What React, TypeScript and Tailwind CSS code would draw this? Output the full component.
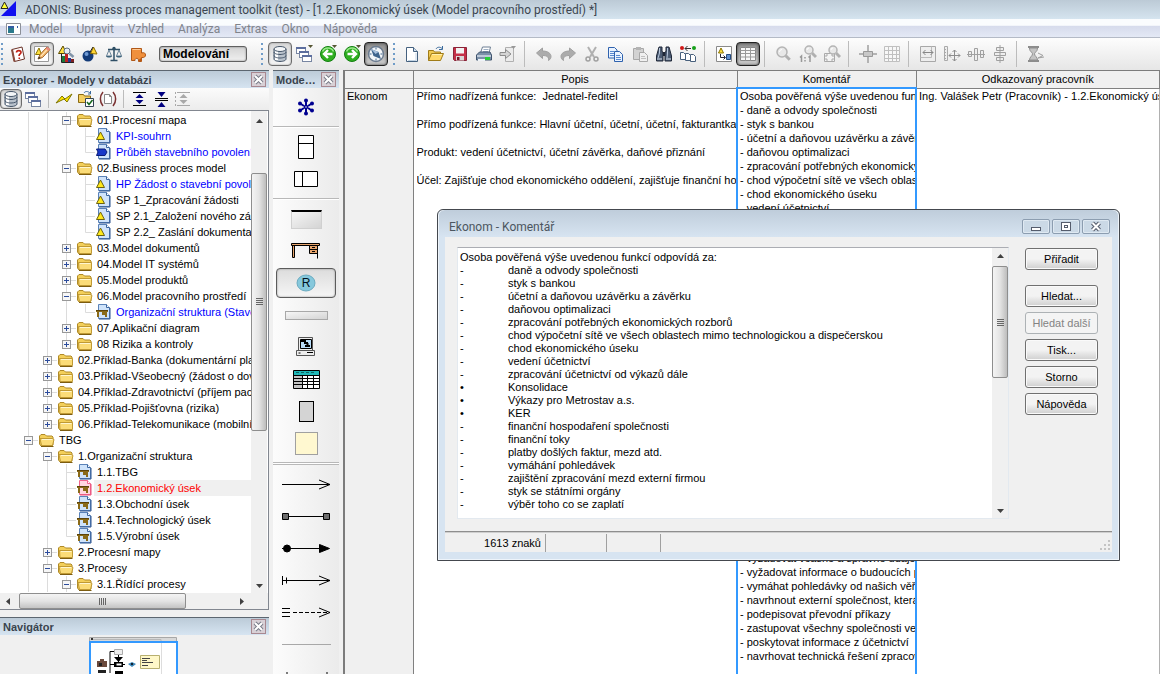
import type { ReactNode } from "react";
import clsx from "clsx";

interface TreeItem {
  depth: number;
  label: string;
  icon: "folder" | "process" | "map" | "desk" | "desk-active";
  toggle?: "open" | "closed";
  tone?: "link" | "active";
  last?: boolean;
}

const treeItems: TreeItem[] = [
  { depth: 2, label: "01.Procesní mapa", icon: "folder", toggle: "open" },
  { depth: 3, label: "KPI-souhrn", icon: "process", tone: "link" },
  { depth: 3, label: "Průběh stavebního povolení", icon: "map", tone: "link", last: true },
  { depth: 2, label: "02.Business proces model", icon: "folder", toggle: "open" },
  { depth: 3, label: "HP Žádost o stavební povol", icon: "process", tone: "link" },
  { depth: 3, label: "SP 1_Zpracování žádosti", icon: "process" },
  { depth: 3, label: "SP 2.1_Založení nového zál", icon: "process" },
  { depth: 3, label: "SP 2.2_ Zaslání dokumentac", icon: "process", last: true },
  { depth: 2, label: "03.Model dokumentů", icon: "folder", toggle: "closed" },
  { depth: 2, label: "04.Model IT systémů", icon: "folder", toggle: "closed" },
  { depth: 2, label: "05.Model produktů", icon: "folder", toggle: "closed" },
  { depth: 2, label: "06.Model pracovního prostředí", icon: "folder", toggle: "open" },
  { depth: 3, label: "Organizační struktura (Stave", icon: "desk", tone: "link", last: true },
  { depth: 2, label: "07.Aplikační diagram", icon: "folder", toggle: "closed" },
  { depth: 2, label: "08 Rizika a kontroly", icon: "folder", toggle: "closed", last: true },
  { depth: 1, label: "02.Příklad-Banka (dokumentární pla", icon: "folder", toggle: "closed" },
  { depth: 1, label: "03.Příklad-Všeobecný (žádost o dov", icon: "folder", toggle: "closed" },
  { depth: 1, label: "04.Příklad-Zdravotnictví (příjem pac", icon: "folder", toggle: "closed" },
  { depth: 1, label: "05.Příklad-Pojišťovna (rizika)", icon: "folder", toggle: "closed" },
  { depth: 1, label: "06.Příklad-Telekomunikace (mobilní", icon: "folder", toggle: "closed", last: true },
  { depth: 0, label: "TBG", icon: "folder", toggle: "open" },
  { depth: 1, label: "1.Organizační struktura", icon: "folder", toggle: "open" },
  { depth: 2, label: "1.1.TBG", icon: "desk" },
  { depth: 2, label: "1.2.Ekonomický úsek", icon: "desk-active", tone: "active" },
  { depth: 2, label: "1.3.Obchodní úsek", icon: "desk" },
  { depth: 2, label: "1.4.Technologický úsek", icon: "desk" },
  { depth: 2, label: "1.5.Výrobní úsek", icon: "desk", last: true },
  { depth: 1, label: "2.Procesní mapy", icon: "folder", toggle: "closed" },
  { depth: 1, label: "3.Procesy", icon: "folder", toggle: "open" },
  { depth: 2, label: "3.1.Řídící procesy", icon: "folder", toggle: "open" },
];

const popis = [
  "Přímo nadřízená funkce:  Jednatel-ředitel",
  "",
  "Přímo podřízená funkce: Hlavní účetní, účetní, účetní, fakturantka",
  "",
  "Produkt: vedení účetnictví, účetní závěrka, daňové přiznání",
  "",
  "Účel: Zajišťuje chod ekonomického oddělení, zajišťuje finanční hosp",
];

const duties = [
  "daně a odvody společnosti",
  "styk s bankou",
  "účetní a daňovou uzávěrku a závěrku",
  "daňovou optimalizaci",
  "zpracování potřebných ekonomických rozborů",
  "chod výpočetní sítě ve všech oblastech mimo technologickou a dispečerskou",
  "chod ekonomického úseku",
  "vedení účetnictví",
  "zpracování účetnictví od výkazů dále",
  "•Konsolidace",
  "•Výkazy pro Metrostav a.s.",
  "•KER",
  "finanční hospodaření společnosti",
  "finanční toky",
  "platby došlých faktur, mezd atd.",
  "vymáhání pohledávek",
  "zajištění zpracování mezd externí firmou",
  "styk se státními orgány",
  "výběr toho co se zaplatí",
];

const rights = [
  "vyžadovat včasné a správné údaje",
  "vyžadovat informace o budoucích p",
  "vymáhat pohledávky od našich věři",
  "navrhnout externí společnost, která",
  "podepisovat převodní příkazy",
  "zastupovat všechny společnosti ve",
  "poskytovat informace z účetnictví",
  "navrhovat technická řešení zpracov",
];

const intro = "Osoba pověřená výše uvedenou funkcí odpovídá za:";

const commentText = [
  intro,
  ...duties.map((d) => (d.startsWith("•") ? `•\t${d.slice(1)}` : `-\t${d}`)),
].join("\n");

const komentar = [
  intro,
  ...duties.map((d) => (d.startsWith("•") ? d : `- ${d}`)),
  ...Array<string>(13).fill(""),
  ...rights.map((r) => `- ${r}`),
];

function Svg({ size = 18, children }: { size?: number; children: ReactNode }) {
  return (
    <svg width={size} height={size} viewBox={`0 0 ${size} ${size}`} fill="none" aria-hidden="true" className="shrink-0">
      {children}
    </svg>
  );
}

/* ---------- toolbar icons, all on an 18px grid ---------- */

const Database = () => (
  <Svg>
    <path d="M3 4v10c0 1.400 2.700 2.500 6 2.500s6-1.100 6-2.500V4" fill="#b9c2cc" stroke="#46566a" />
    <path d="M5.500 6v9" stroke="#fff" strokeWidth="3" />
    <path d="M3 7c0 1.400 2.700 2.500 6 2.500s6-1.100 6-2.500M3 10.500C3 12 5.700 13 9 13s6-1 6-2.500" stroke="#46566a" />
    <ellipse cx="9" cy="4" rx="6" ry="2.500" fill="#f4f6f8" stroke="#46566a" />
  </Svg>
);

const Windows = () => (
  <Svg>
    {[
      [1, 2],
      [4, 6],
      [7, 10],
    ].map(([x, y]) => (
      <g key={x}>
        <rect x={x + 0.5} y={y + 0.5} width="9" height="6" fill="#fff" stroke="#7886a2" />
        <path d={`M${x} ${y + 1}h10`} stroke="#5c6e9e" strokeWidth="2" />
      </g>
    ))}
  </Svg>
);

const HelpBook = () => (
  <Svg>
    <path d="M3 4.500 13 2l2.500 12-10 2.500z" fill="#fff" stroke="#6b3328" />
    <path d="M3 4.500 5.500 16.500" stroke="#8a4a3c" strokeWidth="2" />
    <path d="M7.500 7.500c0-2.500 4.500-2.500 4.500 0 0 1.500-2 1.500-2 3.500M10.300 12.500V14" stroke="#c02014" strokeWidth="1.600" />
  </Svg>
);

const EditModel = () => (
  <Svg>
    <path d="M1.500 1.500h14v15h-14z" fill="#fff" stroke="#9a9a9a" />
    <path d="M6 3 2.500 9.500h6z" fill="#ffe040" stroke="#8a7400" />
    <path d="m5 14 2-4.500L14 2l3 2.500-7.500 8z" fill="#f8c078" stroke="#a06020" />
    <path d="m8 11 7-7.500" stroke="#fff0c8" />
    <path d="m5 14 1-2.500 1.700 1.500z" fill="#333" />
    <path d="m12.500 3.500 1.800-1.700 2.700 2.500L15.300 6z" fill="#e88880" />
  </Svg>
);

const Analysis = () => (
  <Svg>
    <path d="M6 1 1.500 8.500h8z" fill="#ffe040" stroke="#5a4a00" />
    <circle cx="10" cy="6" r="3" fill="#e8eef4" stroke="#596b80" />
    <path d="m12.500 8.500 4 3.500" stroke="#8294a8" strokeWidth="2.500" />
    <path d="M5 17v-6h3v6z" fill="#1c7a3a" />
    <path d="M8 17V9h3v8z" fill="#c02020" />
    <path d="M11 17v-4h3v4z" fill="#243a90" />
    <path d="M14 17v-3h3v3z" fill="#802020" />
    <path d="M4.500 9v8.500H17" stroke="#222" />
  </Svg>
);

const Simulation = () => (
  <Svg>
    <circle cx="7" cy="11" r="5.500" fill="#123a78" />
    <circle cx="5.500" cy="9" r="2" fill="#6f9ad4" />
    <path d="m12.500 2-3 6.500 6.500.5z" fill="#ffd633" stroke="#8a6a00" />
    <path d="m12 2-3 5" stroke="#222" />
  </Svg>
);

const Scales = () => (
  <Svg>
    <path d="M9 2v13M5.500 15.500h7M3 4.500h12" stroke="#2f4f66" strokeWidth="1.500" />
    <path d="M4 5 1.500 11h5zM14 5l-2.500 6h5z" stroke="#6a8498" />
    <path d="M1 11h6c-.5 2-5.500 2-6 0zM11 11h6c-.5 2-5.500 2-6 0z" fill="#3f647c" />
    <circle cx="9" cy="3.500" r="1.700" fill="#2f4f66" />
  </Svg>
);

const Puzzle = () => (
  <Svg>
    <path
      d="M2.500 3.500h10v4.500c3-1 4 .5 4 2s-1 3-4 2.500v4H9.500c1-4-4-4-3.500-1h-3.500z"
      fill="#f0903c"
      stroke="#b05818"
    />
    <path d="M3.500 4.500h8" stroke="#ffc890" />
    <path d="M9 16c1-2 3-3 4-3v3z" fill="#b85814" />
  </Svg>
);

const GreenArrow = ({ left }: { left?: boolean }) => (
  <Svg>
    <circle cx="9" cy="9" r="7.500" fill="#2fae20" stroke="#128010" />
    <path d="M3.500 6.500a6 6 0 0 1 11 0" stroke="#9be88c" strokeWidth="1.500" />
    <path d={left ? "M13.500 9H6M9 5 5 9l4 4" : "M4.500 9H12M9 5l4 4-4 4"} stroke="#fff" strokeWidth="2.400" />
  </Svg>
);

const Compass = () => (
  <Svg>
    <circle cx="9" cy="9" r="7.500" fill="#f4f6f8" stroke="#6c7c90" strokeWidth="1.500" />
    <path d="M9 2.500v2M9 13.500v2M2.500 9h2M13.500 9h2" stroke="#3f648c" />
    <path d="m4 4 7.500 3L14 14 6.500 11z" fill="#3f648c" />
    <path d="m4 4 4.500 5 3-2z" fill="#a8c0dc" />
  </Svg>
);

const NewFile = () => (
  <Svg>
    <path d="M3.500 2.500h7l4 4v10h-11z" fill="#fff" stroke="#45617f" />
    <path d="M10.500 2.500v4h4" fill="#cfdfee" stroke="#45617f" />
    <path d="M13 8v8M5 15.500h8" stroke="#c3d4e4" />
  </Svg>
);

const OpenFolder = () => (
  <Svg>
    <path d="M1.500 15.500v-10h5l1 1.500h6v3" fill="#f0c850" stroke="#a07c18" />
    <path d="m1.500 15.500 3-7h12l-3 7z" fill="#ffd868" stroke="#a07c18" />
    <path d="M5 9.500h10" stroke="#fff0b0" />
    <path d="M9 4c1-2 4-2.500 6-.5M15.500 1v3.500H12" stroke="#3a6a9c" />
  </Svg>
);

const Floppy = () => (
  <Svg>
    <path d="M2.500 2.500h13v13h-12l-1-1z" fill="#c43048" stroke="#8a2438" />
    <path d="M5 3h8v5.500H5z" fill="#f2f2f2" />
    <path d="M5 11h8v4.500H5z" fill="#d8d8d8" />
    <path d="M6 12h2.500v3H6z" fill="#7a1426" />
  </Svg>
);

const Printer = () => (
  <Svg>
    <path d="m5.500 8 2-6h8L14 8z" fill="#fff" stroke="#6d7f94" />
    <path d="M8.500 4.500h5M8 6.500h5" stroke="#9fb0c4" />
    <path d="m1.500 10 3-3h10.500l1.500 3v5h-15z" fill="#7b90a8" stroke="#3f546e" />
    <path d="M2 11h14" stroke="#d3dde8" strokeWidth="1.500" />
    <path d="M10 12h5v3h-5z" fill="#28d03a" />
    <path d="M3 15h7" stroke="#eef3f8" strokeWidth="2" />
  </Svg>
);

const Export = () => (
  <Svg>
    <path d="M6.500 2.500h8v14h-8z" fill="#ececec" stroke="#b0b0b0" />
    <path d="M1 7.500h5.500v-3l5.500 4.500-5.500 4.500v-3H1z" fill="#d4d4d4" stroke="#8c8c8c" />
    <path d="M12 1h5l-2.500 3z" fill="#999" />
  </Svg>
);

const Undo = ({ flip }: { flip?: boolean }) => (
  <Svg>
    <path
      d={
        flip
          ? "m16.500 8-6-5v3C5 6 2 8.500 2 11.500c0 1.500.8 3 2.500 4C4 12 6 10.500 10.500 10.500v3z"
          : "m1.500 8 6-5v3c5.500 0 8.500 2.500 8.500 5.500 0 1.500-.8 3-2.500 4 .5-3.500-1.500-5-6-5v3z"
      }
      fill="#acacac"
      stroke="#a0a0a0"
    />
  </Svg>
);

const Scissors = () => (
  <Svg>
    <path d="m5 2 6 10M13 2 7 12" stroke="#b0b0b0" strokeWidth="2" />
    <circle cx="5" cy="14" r="2" stroke="#a0a0a0" strokeWidth="1.500" />
    <circle cx="13" cy="14" r="2" stroke="#a0a0a0" strokeWidth="1.500" />
  </Svg>
);

const Copy = () => (
  <Svg>
    <path d="M1.500 2.500h6l2.500 2.500v8H1.500z" fill="#eaf3ff" stroke="#2f62ae" />
    <path d="M3 6.500h4M3 8.500h4M3 10.500h4" stroke="#5a8ad0" />
    <path d="M7.500 6.500h5l3 3v7h-8z" fill="#eaf3ff" stroke="#2f62ae" />
    <path d="M9 10.500h4M9 12.500h5M9 14.500h5" stroke="#5a8ad0" />
  </Svg>
);

const Paste = () => (
  <Svg>
    <path d="M2.500 3.500h10v11h-10z" fill="#d2d2d2" stroke="#a8a8a8" />
    <path d="M5 2h5v3H5z" fill="#b4b4b4" />
    <path d="M8.500 7.500h5l3 3v6h-8z" fill="#f0f0f0" stroke="#a8a8a8" />
    <path d="M10 11.500h4M10 13.500h5" stroke="#c0c0c0" />
  </Svg>
);

const Binoculars = () => (
  <Svg>
    <path d="M4 2h3v4l1 2v8H1.500v-5zM14 2h-3v4l-1 2v8h6.500v-5z" fill="#4c5c74" stroke="#202838" />
    <path d="M8 7h2v4H8z" fill="#202838" />
    <path d="M4.500 3v5l-1.500 5M12.500 3v5l-.5 5" stroke="#b9c8dc" />
    <path d="M2 14h5M11 14h5" stroke="#dce6f2" />
  </Svg>
);

const Attributes = () => (
  <Svg>
    <circle cx="3" cy="3" r="2" fill="#d01818" />
    <circle cx="15" cy="3" r="2" fill="#17a01a" />
    <path d="M6 3.500h6M8.500 1 6 3.500 8.500 6" stroke="#333" />
    {[1, 6, 11].map((x) => (
      <path key={x} d={`M${x + 0.5} ${7.5 + (x - 1) / 5}h3l2 2v5h-5z`} fill="#fff" stroke="#48607c" />
    ))}
  </Svg>
);

const ModelView = () => (
  <Svg>
    <path d="M1.500 1.500h15v15h-15z" fill="#fff" stroke="#8a8a8a" />
    <path d="M6 3 3.500 8h5z" fill="#ffe040" stroke="#8a7400" />
    <path d="M5.500 9v3.500H10M8.500 10.500l2 2-2 2" stroke="#223" />
    <path d="M11.500 9.500h4v5h-4z" fill="#5f8fd0" stroke="#234a80" />
  </Svg>
);

const TableView = () => (
  <Svg>
    <path d="M1.500 2.500h15v13h-15z" fill="#f8f8f8" stroke="#888" />
    <path d="M1.500 5.500h15M1.500 8.500h15M1.500 12h15M6.500 2.500v13M11.500 2.500v13" stroke="#999" />
  </Svg>
);

const Lens = ({ x = 7, y = 7, r = 5 }: { x?: number; y?: number; r?: number }) => (
  <>
    <path d={`M${x + r * 0.75} ${y + r * 0.75}l4 4`} stroke="#b0b0b0" strokeWidth="3" />
    <circle cx={x} cy={y} r={r} fill="#e8e8e8" stroke="#b4b4b4" strokeWidth="1.500" />
    <path d={`M${x - r / 2} ${y}a${r / 2} ${r / 2} 0 0 1 ${r / 2} ${-r / 2}`} stroke="#fff" />
  </>
);

const Zoom = () => (
  <Svg>
    <Lens />
  </Svg>
);

const ZoomOne = () => (
  <Svg>
    <Lens x={10} y={5} r={4} />
    <path d="M1 12.500 2.500 11v6M9.500 12.500 11 11v6M6 12v1.500M6 15v1.500" stroke="#999" strokeWidth="1.500" />
  </Svg>
);

const ZoomFit = () => (
  <Svg>
    <path d="M1.500 8.500h10v8h-10z" fill="#f4f4f4" stroke="#aaa" />
    <path d="M3 12v-2h2M8 10h2v2M3 13v2h2M10 13v2H8" stroke="#aaa" />
    <Lens x={10} y={5} r={4} />
  </Svg>
);

const Crosshair = () => (
  <Svg>
    <path d="M9 0v18M0 9h18" stroke="#a0a0a0" strokeWidth="1.500" />
    <path d="M4.500 6.500h9v5h-9z" fill="#c8c8c8" stroke="#999" />
  </Svg>
);

const Grid = () => (
  <Svg>
    <path d="M1.500 1.500h15v15h-15zM1.500 5.500h15M1.500 9.500h15M1.500 13.500h15M5.500 1.500v15M9.500 1.500v15M13.500 1.500v15" fill="#f8f8f8" stroke="#c0c0c0" />
  </Svg>
);

const FitWidth = () => (
  <Svg>
    <path d="M1.500 1.500h15v15h-15z" fill="#eee" stroke="#a8a8a8" />
    <path d="M1.500 12.500h11v-11" stroke="#bbb" />
    <path d="M4 7.500h10M6.500 5 4 7.500 6.500 10M11.500 5 14 7.500 11.500 10" stroke="#888" />
  </Svg>
);

const Ruler = () => (
  <Svg>
    <path d="M1.500 1.500h3v14h-3zM1.500 4.500H3M1.500 7.500H3M1.500 10.500H3M1.500 13.500H3" fill="#eee" stroke="#aaa" />
    <path d="M11.500 5v11M6 10.500h11M9.500 7l2-2 2 2M9.500 14l2 2 2-2M15 8.500l2 2-2 2M8 8.500l-2 2 2 2" stroke="#8c8c8c" />
  </Svg>
);

const AlignMiddle = () => (
  <Svg>
    <path d="M1.500 6.500h3v5h-3zM7.500 3.500h3v12h-3zM13.500 5.500h3v7h-3z" fill="#eee" stroke="#a0a0a0" />
    <path d="M0 9.500h18" stroke="#a0a0a0" />
  </Svg>
);

const AlignCenter = () => (
  <Svg>
    <path d="M5.500 2.500h7v3h-7zM3.500 7.500h11v3h-11zM5.500 12.500h7v3h-7z" fill="#eee" stroke="#a0a0a0" />
    <path d="M9 0v18" stroke="#a0a0a0" />
  </Svg>
);

const Hourglass = () => (
  <Svg>
    <path d="M1 2h11M1 16h11" stroke="#8c8c8c" strokeWidth="2" />
    <path d="M2.500 3c0 4 3 4 3 6s-3 3-3 6h8c0-3-3-4-3-6s3-2 3-6z" fill="#c4c4c4" stroke="#909090" />
    <path d="m11 8 5 2.500-5 2.500 6-1" stroke="#a0a0a0" />
  </Svg>
);

const Lightning = () => (
  <Svg>
    <path d="m1 13 6-7 3 3 7-5-5 8-3-3z" fill="#ffe600" stroke="#7d7300" />
  </Svg>
);

const FolderCheck = () => (
  <Svg>
    <path d="M1.500 12.500v-8h5l1 1.500h6v6.500z" fill="#f4cf60" stroke="#8a6a10" />
    <path d="M7 3c1-2 4-2 6 0M13.500 1v3H11" stroke="#3a6a9c" />
    <path d="M8.500 8.500h8v8h-8z" fill="#fff" stroke="#345" />
    <path d="m10 12 2 2.500L15.500 10" stroke="#14661c" strokeWidth="1.500" />
  </Svg>
);

const BracketDoc = () => (
  <Svg>
    <path d="M4 2C.5 6 .5 12 4 16M14 2c3.500 4 3.500 10 0 14" stroke="#7a3030" strokeWidth="1.500" />
    <path d="M5.500 4.500h5l2 2v7h-7z" fill="#fff" stroke="#888" />
    <path d="M10.500 4.500v2h2" stroke="#888" />
  </Svg>
);

const Spread = ({ inward, muted }: { inward?: boolean; muted?: boolean }) => {
  const color = muted ? "#a8a8a8" : "#000080";
  return (
    <Svg>
      <path d={inward ? "M3 8.500h13M3 10.500h13" : "M3 2.500h13M3 15.500h13"} stroke={muted ? color : "#000"} />
      <path d={inward ? "M5.500 2h8L9.500 7zM5.500 17h8l-4-5z" : "M5.500 8h8L9.500 4zM5.500 10h8l-4 4z"} fill={color} />
      {muted && <path d="M1.500 2v14" stroke={color} strokeDasharray="2 2" />}
    </Svg>
  );
};

/* ---------- tree icons ---------- */

const Folder = ({ open }: { open?: boolean }) => (
  <svg width="18" height="16" viewBox="0 0 18 16" fill="none" aria-hidden="true" className="shrink-0">
    <path d="M1.500 12V4L3 2.500h4L8.500 4H14l1 1v8l-1 1H3z" fill="#f3cf5a" stroke="#b08a28" />
    <path
      d={open ? "M3.500 13.500 2 6.500h12l2 1-1.500 6z" : "M3 13.500 2.500 6.500h13v7z"}
      fill="#fbdc78"
      stroke="#c09a34"
    />
    <path d="M4 7.500h10.500" stroke="#fff6cf" />
    <path d="M3 14.500h12.500" stroke="#7c5c10" />
  </svg>
);

function ModelIcon({ kind }: { kind: TreeItem["icon"] }) {
  const active = kind === "desk-active";
  return (
    <svg width="18" height="16" viewBox="0 0 18 16" fill="none" aria-hidden="true" className="shrink-0">
      <path d="M3.500.5h8l3 3v11h-11z" fill={active ? "#ffd6e0" : "#cfe3fa"} stroke={active ? "#f0648c" : "#5a82b8"} />
      <path d="M11.500.5v3h3" fill="#fff" stroke={active ? "#f0648c" : "#3c66a0"} />
      <path d="M4 15h11V4" stroke={active ? "#e8507c" : "#2c5490"} />
      {kind === "process" && <path d="M5.500 4 1.500 11.500h8z" fill="#ffe81a" stroke="#6c6210" />}
      {kind === "map" && <path d="M1.500 5h8.500l2 3-2 3.500H1.500L3 8z" fill="#1838c8" stroke="#0a1c78" />}
      {(kind === "desk" || active) && (
        <>
          <path d="M1 6h12v2H1zM2 8h2v5H2zM10 8h2v5h-2zM7 8h3v3H7z" fill="#8a6a18" />
          <path d="M1 6.500h12" stroke="#5c430a" />
        </>
      )}
    </svg>
  );
}

function TreeRow({ item }: { item: TreeItem }) {
  return (
    <li className="flex h-4 items-center whitespace-nowrap pl-[19px]">
      {Array.from({ length: item.depth }, (_, i) => (
        <span key={i} className="flex h-4 w-[19px] shrink-0 justify-center">
          <span className="w-px bg-[#dcdcdc]" />
        </span>
      ))}
      <svg width="19" height="16" viewBox="0 0 19 16" fill="none" aria-hidden="true" className="shrink-0">
        <path d={item.last ? "M9.500 0v8.500H19" : "M9.500 0v16M9.500 8.500H19"} stroke="#dcdcdc" />
        {item.toggle && (
          <>
            <rect x="5.500" y="4.500" width="8" height="8" fill="#f6f6f6" stroke="#989898" />
            <path d={item.toggle === "open" ? "M7 8.500h5" : "M7 8.500h5M9.500 6v5"} stroke="#2c4c9c" />
          </>
        )}
      </svg>
      {item.icon === "folder" ? <Folder open={item.toggle === "open"} /> : <ModelIcon kind={item.icon} />}
      <span
        className={clsx(
          "h-4 pl-[3px] leading-4",
          item.tone === "link" && "text-[#0000ff]",
          item.tone === "active" && "grow bg-[#f0f0f0] text-[#ff0000]",
        )}
      >
        {item.label}
      </span>
    </li>
  );
}

/* ---------- shared chrome ---------- */

const toolStyles = {
  plain: "border-transparent",
  pressed: "border-[#6c6c6c] bg-linear-to-b from-[#d8d8d8] to-[#f6f6f6] shadow-[inset_0_0_2px_#888]",
  dark: "border-[#222222] bg-linear-to-b from-[#8c8c8c] to-[#d0d0d0] shadow-[inset_0_0_3px_#333]",
};

interface ToolProps {
  label: string;
  state?: keyof typeof toolStyles;
  arrow?: boolean;
  compact?: boolean;
  children: ReactNode;
}

function Tool({ label, state = "plain", arrow, compact, children }: ToolProps) {
  return (
    <button
      type="button"
      aria-label={label}
      className={clsx(
        "relative flex shrink-0 items-center justify-center rounded-sm border",
        compact ? "h-5 w-[22px]" : "size-6",
        toolStyles[state],
      )}
    >
      {children}
      {arrow && (
        <svg width="5" height="3" viewBox="0 0 5 3" aria-hidden="true" className="absolute right-0.5 top-0.5">
          <path d="M0 0h5L2.500 3z" fill="#555533" />
        </svg>
      )}
    </button>
  );
}

const Divider = () => (
  <span className="flex h-[26px] w-3 shrink-0 pl-1">
    <span className="w-px bg-[#bcbcbc]" />
  </span>
);

const Handle = () => (
  <svg width="4" height="24" viewBox="0 0 4 24" aria-hidden="true" className="shrink-0">
    {[1, 6, 11, 16, 21].map((y) => (
      <rect key={y} x="1" y={y} width="2" height="2" fill="#6f9cc8" />
    ))}
  </svg>
);

function PanelHeader({ title }: { title: string }) {
  return (
    <header className="flex h-[18px] shrink-0 items-center justify-between gap-1 border-t border-[#5c6670] bg-linear-to-b from-[#bccbd8] to-[#d6e4f1] px-[3px]">
      <h2 className="truncate text-[11px] font-bold leading-4 text-[#39434d]">{title}</h2>
      <button
        type="button"
        aria-label={`Zavřít ${title}`}
        className="flex size-[15px] shrink-0 items-center justify-center border border-[#a88890] bg-[#d8d0d6]"
      >
        <svg width="11" height="11" viewBox="0 0 11 11" fill="none" aria-hidden="true">
          <path d="m2 2 7 7M9 2 2 9" stroke="#787c88" strokeWidth="4" />
          <path d="m2 2 7 7M9 2 2 9" stroke="#ffffff" strokeWidth="2" />
        </svg>
      </button>
    </header>
  );
}

function ScrollArrow({ dir }: { dir: "up" | "down" | "left" | "right" }) {
  const paths = { up: "M0 5h7L3.500 1z", down: "M0 2h7L3.500 6z", left: "M5 0v7L1 3.500z", right: "M2 0v7l4-3.500z" };
  return (
    <button type="button" aria-label={`scroll ${dir}`} className="flex size-4 shrink-0 items-center justify-center">
      <svg width="7" height="7" viewBox="0 0 7 7" aria-hidden="true">
        <path d={paths[dir]} fill="#404040" />
      </svg>
    </button>
  );
}

function VThumb({ className }: { className: string }) {
  return (
    <div
      className={clsx(
        "flex basis-0 flex-col items-center justify-center gap-px rounded-xs border border-[#8e8e8e] bg-linear-to-r from-[#f4f4f4] via-[#e4e4e4] to-[#bdbdbd]",
        className,
      )}
    >
      {[0, 1, 2, 3].map((i) => (
        <span key={i} className="h-px w-[7px] bg-[#666666]" />
      ))}
    </div>
  );
}

/* ---------- palette ---------- */

const PaletteLine = ({ children }: { children: ReactNode }) => (
  <svg width="50" height="16" viewBox="0 0 50 16" fill="none" stroke="#000" aria-hidden="true">
    {children}
  </svg>
);

const PaletteItem = ({ label, active, children }: { label: string; active?: boolean; children: ReactNode }) => (
  <button
    type="button"
    aria-label={label}
    className={clsx(
      "mx-[3px] my-px flex h-[30px] shrink-0 items-center justify-center rounded-sm border",
      active
        ? "border-[#5c5c5c] bg-linear-to-b from-[#dcdcdc] to-[#f6f6f6] shadow-[inset_0_0_2px_#888]"
        : "border-transparent",
    )}
  >
    {children}
  </button>
);

const PaletteRule = () => (
  <div className="h-2 shrink-0 pt-[3px]">
    <div className="h-0.5 border-t border-[#b8b8b8] bg-white" />
  </div>
);

function Palette() {
  return (
    <aside className="flex w-[66px] shrink-0 flex-col overflow-hidden bg-linear-to-r from-[#fcfcfc] to-[#ebebeb]">
      <PanelHeader title="Modelování" />
      <div className="flex flex-col pt-[3px]">
        <PaletteItem label="Poznámka">
          <Svg>
            <g stroke="#000090" strokeWidth="2">
              <path d="M9 7V2M9 11v5M7 8 2.500 5M11 10l4.500 3M11 8l4.500-3M7 10l-4.500 3" />
            </g>
            <g fill="#000090">
              <circle cx="9" cy="2.500" r="2" />
              <circle cx="9" cy="15.500" r="2" />
              <circle cx="3" cy="5.500" r="2" />
              <circle cx="15" cy="5.500" r="2" />
              <circle cx="3" cy="12.500" r="2" />
              <circle cx="15" cy="12.500" r="2" />
            </g>
            <circle cx="9" cy="9" r="1.500" fill="#fff" stroke="#000090" strokeWidth="1.500" />
          </Svg>
        </PaletteItem>
        <PaletteRule />
        <PaletteItem label="Svislý bazén">
          <svg width="16" height="24" viewBox="0 0 16 24" fill="#fff" stroke="#000" aria-hidden="true">
            <path d="M.5.5h15v23H.5zM.5 8.500h15" />
          </svg>
        </PaletteItem>
        <PaletteItem label="Vodorovný bazén">
          <svg width="24" height="16" viewBox="0 0 24 16" fill="#fff" stroke="#000" aria-hidden="true">
            <path d="M.5.5h23v15H.5zM8.500.5v15" />
          </svg>
        </PaletteItem>
        <PaletteRule />
        <PaletteItem label="Organizační jednotka">
          <span className="h-[19px] w-[31px] border border-t-2 border-[#d0d0d0] border-t-black bg-linear-to-br from-[#f6f6f6] to-[#d4d4d4]" />
        </PaletteItem>
        <PaletteItem label="Pracovní místo">
          <svg width="30" height="16" viewBox="0 0 30 16" fill="#e8a56c" stroke="#000" aria-hidden="true">
            <path d="M.5.5h28v2H.5zM1.500 2.500h2v12h-2z" />
            <path d="M18.500 2.500h8v4h-8zM18.500 6.500h8v4h-8z" />
            <path d="M21 4.500h3M21 8.500h3M26.500 2.500v13" />
          </svg>
        </PaletteItem>
        <PaletteItem label="Role" active>
          <svg width="20" height="18" viewBox="0 0 20 18" aria-hidden="true">
            <ellipse cx="10" cy="9" rx="9" ry="8" fill="#86c8dc" stroke="#6cabc0" />
            <text x="10" y="13" textAnchor="middle" fontSize="12" fontFamily="Liberation Sans, sans-serif" fill="#001020">
              R
            </text>
          </svg>
        </PaletteItem>
        <PaletteItem label="Agregace">
          <span className="h-[9px] w-[43px] border border-[#a8a8a8] bg-linear-to-br from-[#f6f6f6] to-[#d4d4d4]" />
        </PaletteItem>
        <PaletteItem label="Počítač">
          <svg width="20" height="20" viewBox="0 0 20 20" fill="#eee" stroke="#555" aria-hidden="true">
            <path d="M2.500.5h14v13h-14zM.5 13.500h18v5H.5z" />
            <path d="M4.500 2.500h11v9h-11z" fill="#b8dcf8" stroke="#000" />
            <path d="M5 4h5M8 6h4M9 9h5M11.500 6v2" stroke="#000" strokeWidth="2" />
            <path d="M2.500 16h2M11 15.500h6" stroke="#000" />
          </svg>
        </PaletteItem>
        <PaletteItem label="Tabulka">
          <svg width="27" height="19" viewBox="0 0 27 19" fill="#fff" stroke="#000" aria-hidden="true">
            <path d="M.5.5h26v18H.5z" />
            <path d="M1 1h25v4H1z" fill="#20b8b8" stroke="none" />
            <path d="M1 6h8v12H1z" fill="#c4c4c4" stroke="none" />
            <path d="M.5 5.500h26M.5 8.500h26M.5 11.500h26M.5 14.500h26M9.500 5.500v13M14.500 5.500v13M20.500 5.500v13" />
            <path d="M3 2.500h20" stroke="#0c6464" strokeDasharray="3 2" />
          </svg>
        </PaletteItem>
        <PaletteItem label="Dokument">
          <span className="h-[21px] w-[15px] border border-black bg-[#d4d4d4]" />
        </PaletteItem>
        <PaletteItem label="Poznámkový lístek">
          <span className="size-[23px] border border-[#a0a0a0] bg-[#fff8d0]" />
        </PaletteItem>
        <div className="my-[3px] h-[3px] shrink-0 border-y border-[#b8b8b8] bg-white" />
        <PaletteItem label="Šipka">
          <PaletteLine>
            <path d="M1 8.500h48M38 4l11 4.500L38 13" />
          </PaletteLine>
        </PaletteItem>
        <PaletteItem label="Spojení">
          <PaletteLine>
            <path d="M4 8.500h42" />
            <path d="M1.500 5.500h6v6h-6zM42.500 5.500h6v6h-6z" fill="#6c6c6c" />
          </PaletteLine>
        </PaletteItem>
        <PaletteItem label="Vedení">
          <PaletteLine>
            <path d="M1 8.500h40" />
            <circle cx="6" cy="8.500" r="3.500" fill="#000" />
            <path d="m38.500 4.500 10 4-10 4z" fill="#000" />
          </PaletteLine>
        </PaletteItem>
        <PaletteItem label="Příslušnost">
          <PaletteLine>
            <path d="M1 8.500h48M38 4l11 4.500L38 13M1.500 4v9M5.500 5.500v6" />
          </PaletteLine>
        </PaletteItem>
        <PaletteItem label="Odkaz">
          <PaletteLine>
            <path d="M1 4.500h8M1 8.500h8M1 12.500h8M38 4l11 4.500L38 13" />
            <path d="M12 8.500h37" strokeDasharray="4 2" />
          </PaletteLine>
        </PaletteItem>
        <PaletteItem label="Hrana">
          <PaletteLine>
            <path d="M1 8.500h49" stroke="#a8a8a8" />
          </PaletteLine>
        </PaletteItem>
        <PaletteItem label="Vazba">
          <PaletteLine>
            <path d="M1 8.500h48M6 4v9M46 4v9" />
          </PaletteLine>
        </PaletteItem>
      </div>
    </aside>
  );
}

/* ---------- explorer + navigator ---------- */

function Explorer() {
  return (
    <section className="flex min-h-0 grow flex-col">
      <PanelHeader title="Explorer - Modely v databázi" />
      <div className="flex h-[22px] shrink-0 items-center bg-linear-to-b from-[#fbfbfb] to-[#ececec]">
        <Tool compact label="Databáze" state="pressed"><Database /></Tool>
        <Tool compact label="Okna"><Windows /></Tool>
        <span className="mx-1 h-[18px] w-px bg-[#bcbcbc]" />
        <Tool compact label="Obnovit"><Lightning /></Tool>
        <Tool compact label="Vybrat"><FolderCheck /></Tool>
        <Tool compact label="Dokument"><BracketDoc /></Tool>
        <span className="mx-1 h-[18px] w-px bg-[#bcbcbc]" />
        <Tool compact label="Rozbalit"><Spread /></Tool>
        <Tool compact label="Sbalit"><Spread inward /></Tool>
        <Tool compact label="Rozbalit vše"><Spread muted /></Tool>
      </div>
      <div className="flex min-h-0 grow flex-col border-y border-r border-[#828790] bg-white">
        <div className="flex min-h-0 grow pr-px">
          <ul className="min-w-0 grow overflow-hidden pt-px">
            {treeItems.map((item) => (
              <TreeRow key={item.label} item={item} />
            ))}
          </ul>
          <div className="flex w-4 shrink-0 flex-col bg-[#f0f0f0] pt-0.5">
            <ScrollArrow dir="up" />
            <div className="grow-[44] basis-0" />
            <VThumb className="grow-[258]" />
            <div className="grow-[147] basis-0" />
            <ScrollArrow dir="down" />
          </div>
        </div>
        <div className="flex h-4 shrink-0 bg-[#f0f0f0] pr-[19px]">
          <ScrollArrow dir="left" />
          <span className="w-[3px]" />
          <div className="flex grow-[167] basis-0 items-center justify-center gap-px rounded-xs border border-[#8e8e8e] bg-linear-to-b from-[#f4f4f4] via-[#e4e4e4] to-[#c4c4c4]">
            {[0, 1, 2, 3].map((i) => (
              <span key={i} className="h-[7px] w-px bg-[#666666]" />
            ))}
          </div>
          <div className="grow-[47] basis-0" />
          <ScrollArrow dir="right" />
        </div>
      </div>
    </section>
  );
}

function Navigator() {
  return (
    <section className="mt-[7px] flex h-[57px] shrink-0 flex-col overflow-hidden">
      <PanelHeader title="Navigátor" />
      <div className="pl-[88px] pt-0.5">
        <svg width="92" height="60" viewBox="0 0 92 60" fill="none" aria-hidden="true">
          <path d="M1.500 60V.5h87V60" fill="#d8d8d8" stroke="#a8a8a8" />
          <path d="M3 2.500h70V60" stroke="#b8b8b8" />
          <path d="M3 1h2v2H3z" fill="#333" />
          <path d="M2 60V5h87v55" fill="#fff" stroke="#3399ff" strokeWidth="2" />
          <path d="M73.500 6v54" stroke="#dddddd" />
          <path d="M26.500 12.500h8v5h-8z" fill="#eee" stroke="#aaa" />
          <path d="M26 14.500h-4V36M30.500 18v9M22 27.500h4M34 27.500h3" stroke="#000" />
          <path d="M26 20h9l-4.500 5zM26 25h9v5h-9z" fill="#000" />
          <path d="M28.500 26.500h5v2h-5z" fill="#fff" />
          <path d="M27 34h8v3h-8z" fill="#000" />
          <path d="M9 24h3v-2h4v2h3v6H9z" fill="#6b4a3c" />
          <path d="M11 26h3v3h-3zM10 33h8v3h-8z" fill="#222" />
          <path d="m40 27 4-2 4 2-4 3z" fill="#3b86b8" />
          <path d="M43 26h2v2h-2z" fill="#123" />
          <path d="M52.500 18.500h19v13h-19z" fill="#fff8c8" stroke="#b8b070" />
          <path d="M54 21.500h8M54 23.500h5M54 25.500h11M54 28.500h6" stroke="#444" />
        </svg>
      </div>
    </section>
  );
}

/* ---------- attribute table ---------- */

function Lines({ lines }: { lines: string[] }) {
  return (
    <div className="overflow-hidden whitespace-pre">
      {lines.map((line, i) => (
        <p key={i} className="h-[14px] overflow-hidden leading-[14px]">
          {line}
        </p>
      ))}
    </div>
  );
}

function AttributeTable() {
  return (
    <main className="min-w-0 grow overflow-hidden border-l-2 border-t border-[#7c7c7c] bg-white">
      <table className="h-full w-full table-fixed border-collapse text-left align-top">
        <colgroup>
          <col className="w-[68px]" />
          <col className="w-[324px]" />
          <col className="w-[179px]" />
          <col />
        </colgroup>
        <thead>
          <tr className="h-[17px] bg-[#f0f0f0]">
            {["", "Popis", "Komentář", "Odkazovaný pracovník"].map((title, i) => (
              <th
                key={i}
                scope="col"
                className="h-[17px] border-b border-r border-[#808080] p-0 text-center font-normal leading-4"
              >
                {title}
              </th>
            ))}
          </tr>
        </thead>
        <tbody>
          <tr className="align-top">
            <th scope="row" className="border-r border-[#808080] bg-[#f0f0f0] px-0.5 font-normal leading-[14px]">
              Ekonom
            </th>
            <td className="border-r border-[#808080] pl-[3px]">
              <Lines lines={popis} />
            </td>
            <td className="border-x-2 border-t-2 border-[#3399ff] pl-0.5">
              <Lines lines={komentar} />
            </td>
            <td className="border-r border-[#b0b0b0] pl-0.5">
              <Lines lines={["Ing. Valášek Petr (Pracovník) - 1.2.Ekonomický ús"]} />
            </td>
          </tr>
        </tbody>
      </table>
    </main>
  );
}

/* ---------- comment dialog ---------- */

const DialogButton = ({ children, disabled, className }: { children: string; disabled?: boolean; className?: string }) => (
  <button
    type="button"
    disabled={disabled}
    className={clsx(
      "h-[22px] w-[73px] rounded-[3px] border leading-4",
      disabled
        ? "border-[#adb2b5] bg-[#f4f4f4] text-[#838383]"
        : "border-[#707070] bg-linear-to-b from-[#f3f3f3] from-50% to-[#cfcfcf] text-black shadow-[inset_0_0_0_1px_#fafafa]",
      className,
    )}
  >
    {children}
  </button>
);

const WindowButton = ({ label, children }: { label: string; children: ReactNode }) => (
  <button
    type="button"
    aria-label={label}
    className="flex h-[15px] w-7 items-center justify-center rounded-xs border border-[#8c9db0] bg-[#cbd9e6] shadow-[inset_0_0_0_1px_#dfe9f2]"
  >
    <svg width="12" height="11" viewBox="0 0 12 11" fill="none" aria-hidden="true">
      {children}
    </svg>
  </button>
);

function CommentDialog() {
  return (
    <div
      role="dialog"
      aria-labelledby="comment-title"
      className="absolute left-[437px] top-[209px] w-[683px] rounded-t-md border border-[#44484e] bg-[#d7e4f1] px-[7px] pb-2 shadow-[inset_0_0_0_1px_#eef4fa]"
    >
      <header className="-mx-1.5 flex h-[27px] items-center justify-between rounded-t-md bg-linear-to-b from-[#bfcddb] to-[#d7e4f1] pl-[10px] pr-2 pt-1.5">
        <h2 id="comment-title" className="font-[Roboto,sans-serif] text-[12px] leading-4 text-[#4c5660]">
          Ekonom - Komentář
        </h2>
        <div className="flex gap-0.5">
          <WindowButton label="Minimalizovat">
            <rect x="1.500" y="6.500" width="9" height="3" fill="#fff" stroke="#555c6c" />
          </WindowButton>
          <WindowButton label="Maximalizovat">
            <rect x="1.500" y="1.500" width="9" height="8" fill="#fff" stroke="#555c6c" />
            <rect x="4.500" y="4.500" width="3" height="2" stroke="#555c6c" />
          </WindowButton>
          <WindowButton label="Zavřít">
            <path d="m2.500 2 7 7M9.500 2l-7 7" stroke="#555c6c" strokeWidth="4" />
            <path d="m2.500 2 7 7M9.500 2l-7 7" stroke="#fff" strokeWidth="2" />
          </WindowButton>
        </div>
      </header>
      <div className="bg-[#f0f0f0]">
        <div className="flex items-start gap-4 pb-3 pl-3 pr-[14px] pt-[10px]">
          <div className="flex h-[272px] min-w-0 grow border border-[#e3e9ef] border-t-[#abadb3] bg-white">
            <textarea
              aria-label="Komentář"
              defaultValue={commentText}
              className="block min-w-0 grow resize-none overflow-hidden whitespace-pre bg-white pl-0.5 pt-[3px] text-[11px] leading-[13px] text-black outline-none [tab-size:48px]"
            />
            <div className="flex w-4 shrink-0 flex-col bg-[#f0f0f0]">
              <ScrollArrow dir="up" />
              <div className="grow-[2] basis-0" />
              <VThumb className="grow-[110]" />
              <div className="grow-[124] basis-0" />
              <ScrollArrow dir="down" />
            </div>
          </div>
          <div className="flex shrink-0 flex-col gap-[5px] pt-px">
            <DialogButton className="mb-[10px]">Přiřadit</DialogButton>
            <DialogButton>Hledat...</DialogButton>
            <DialogButton disabled>Hledat další</DialogButton>
            <DialogButton>Tisk...</DialogButton>
            <DialogButton>Storno</DialogButton>
            <DialogButton>Nápověda</DialogButton>
          </div>
        </div>
        <footer className="flex h-[21px] border-t border-[#8e8e8e] pt-0.5 shadow-[inset_0_1px_0_#cfcfcf]">
          <span className="w-[101px] border-r border-[#a0a0a0] pr-1 text-right leading-[18px]">1613 znaků</span>
          <span className="w-[61px] border-r border-[#a0a0a0]" />
          <span className="w-[54px] border-r border-[#a0a0a0]" />
          <svg width="12" height="12" viewBox="0 0 12 12" aria-hidden="true" className="ml-auto mt-1.5">
            <path d="M8 0h2v2H8zM4 4h2v2H4zM8 4h2v2H8zM0 8h2v2H0zM4 8h2v2H4zM8 8h2v2H8z" fill="#c4c4c4" />
          </svg>
        </footer>
      </div>
    </div>
  );
}

/* ---------- application ---------- */

const menu = ["Model", "Upravit", "Vzhled", "Analýza", "Extras", "Okno", "Nápověda"];

function Toolbar() {
  return (
    <div role="toolbar" className="flex h-8 shrink-0 items-center overflow-hidden bg-linear-to-b from-[#fdfdfd] to-[#e6e6e6]">
      <Handle />
      <span className="w-0.5 shrink-0" />
      <Tool label="Nápověda"><HelpBook /></Tool>
      <Tool label="Modelování" state="pressed"><EditModel /></Tool>
      <Tool label="Analýza"><Analysis /></Tool>
      <Tool label="Simulace"><Simulation /></Tool>
      <Tool label="Hodnocení"><Scales /></Tool>
      <Tool label="Import a export"><Puzzle /></Tool>
      <button
        type="button"
        className="ml-[9px] mr-[13px] h-4 w-[88px] shrink-0 rounded-[3px] border border-[#606060] bg-linear-to-b from-[#d4d4d4] to-[#f0f0f0] pl-[3px] text-left text-[12px] font-bold leading-[14px] shadow-[inset_0_0_2px_#777]"
      >
        Modelování
      </button>
      <Handle />
      <span className="w-1 shrink-0" />
      <Tool label="Explorer" state="pressed"><Database /></Tool>
      <Tool label="Okna" arrow><Windows /></Tool>
      <Tool label="Zpět" arrow><GreenArrow left /></Tool>
      <Tool label="Vpřed" arrow><GreenArrow /></Tool>
      <Tool label="Navigátor" state="dark"><Compass /></Tool>
      <span className="w-1 shrink-0" />
      <Handle />
      <span className="w-1 shrink-0" />
      <Tool label="Nový"><NewFile /></Tool>
      <Tool label="Otevřít"><OpenFolder /></Tool>
      <Tool label="Uložit"><Floppy /></Tool>
      <Tool label="Tisk"><Printer /></Tool>
      <Tool label="Export"><Export /></Tool>
      <Divider />
      <Tool label="Zpět o krok"><Undo /></Tool>
      <Tool label="Znovu"><Undo flip /></Tool>
      <Tool label="Vyjmout"><Scissors /></Tool>
      <Tool label="Kopírovat"><Copy /></Tool>
      <Tool label="Vložit"><Paste /></Tool>
      <Tool label="Hledat"><Binoculars /></Tool>
      <Tool label="Atributy"><Attributes /></Tool>
      <Divider />
      <Tool label="Grafický náhled"><ModelView /></Tool>
      <Tool label="Tabulkový náhled" state="dark"><TableView /></Tool>
      <Divider />
      <Tool label="Lupa"><Zoom /></Tool>
      <Tool label="Skutečná velikost"><ZoomOne /></Tool>
      <Tool label="Celý model"><ZoomFit /></Tool>
      <Divider />
      <Tool label="Střed"><Crosshair /></Tool>
      <Tool label="Mřížka"><Grid /></Tool>
      <Divider />
      <Tool label="Šířka"><FitWidth /></Tool>
      <Tool label="Pravítko"><Ruler /></Tool>
      <Tool label="Zarovnat svisle"><AlignMiddle /></Tool>
      <Tool label="Zarovnat vodorovně"><AlignCenter /></Tool>
      <Divider />
      <Tool label="Dotazy"><Hourglass /></Tool>
    </div>
  );
}

export default function App() {
  return (
    <div className="relative flex h-screen flex-col overflow-hidden bg-[#f0f0f0] font-['Liberation_Sans',Arial,sans-serif] text-[11px] text-black">
      <header className="flex h-[19px] shrink-0 items-center bg-linear-to-b from-[#bccad6] to-[#d5e4ef]">
        <svg width="17" height="18" viewBox="0 0 17 18" aria-hidden="true" className="mr-2 shrink-0">
          <path d="M16 0v15H1z" fill="#1010f0" />
          <path d="M4.500 1 1 7.500h7z" fill="#ffff30" stroke="#222" />
        </svg>
        <h1 className="truncate font-[Roboto,sans-serif] text-[12px] leading-4 text-[#3c4650]">
          ADONIS: Business proces management toolkit (test) - [1.2.Ekonomický úsek (Model pracovního prostředí) *]
        </h1>
      </header>
      <nav className="flex h-[19px] shrink-0 items-center gap-[14px] border-b border-[#b4bac6] bg-linear-to-b from-[#fafcfe] from-35% via-[#d6dbec] via-40% to-[#e4e9f5] pl-1.5 pt-0.5 font-[Roboto,sans-serif] text-[12px] leading-4 text-[#80848c]">
        <svg width="15" height="12" viewBox="0 0 15 12" aria-hidden="true" className="-mr-1.5 shrink-0">
          <path d="M.5.5h14v11H.5z" fill="#fff" stroke="#8c9098" />
          <path d="M2 3h6v7H2z" fill="#2a7a8c" />
          <path d="M2 3h6v2H2z" fill="#345ca4" />
          <path d="M11 3h1v2h-1z" fill="#345ca4" />
        </svg>
        {menu.map((item) => (
          <button key={item} type="button">
            {item}
          </button>
        ))}
      </nav>
      <Toolbar />
      <div className="flex min-h-0 grow">
        <div className="mr-1 flex w-[269px] shrink-0 flex-col">
          <Explorer />
          <Navigator />
        </div>
        <Palette />
        <div className="w-1 shrink-0" />
        <AttributeTable />
      </div>
      <CommentDialog />
    </div>
  );
}
